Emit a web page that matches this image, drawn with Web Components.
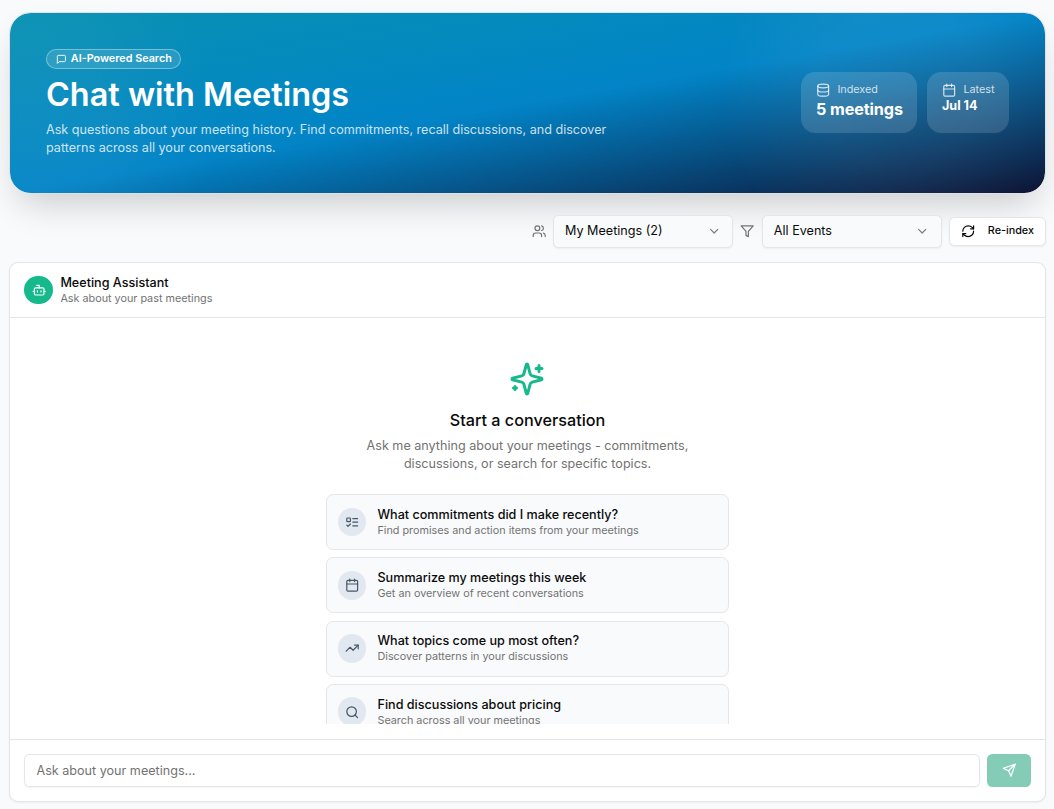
<!DOCTYPE html>
<html lang="en"><head><meta charset="utf-8"><title>Chat with Meetings</title>
<style>
html,body{margin:0;height:100%;background:#f9fafc}
body{font:400 12.6px/18px Inter,"Liberation Sans",sans-serif;color:#0a0a0a;overflow:hidden}
</style></head><body>
<meeting-chat-page></meeting-chat-page>
<script>
const ICONS={
 message:'<path d="M21 15a2 2 0 0 1-2 2H7l-4 4V5a2 2 0 0 1 2-2h14a2 2 0 0 1 2 2z"/>',
 database:'<ellipse cx="12" cy="5" rx="9" ry="3"/><path d="M3 5V19A9 3 0 0 0 21 19V5"/><path d="M3 12A9 3 0 0 0 21 12"/>',
 calendar:'<path d="M8 2v4M16 2v4"/><rect width="18" height="18" x="3" y="4" rx="2"/><path d="M3 10h18"/>',
 users:'<path d="M16 21v-2a4 4 0 0 0-4-4H6a4 4 0 0 0-4 4v2"/><circle cx="9" cy="7" r="4"/><path d="M22 21v-2a4 4 0 0 0-3-3.87"/><path d="M16 3.13a4 4 0 0 1 0 7.75"/>',
 funnel:'<path d="M22 3H2l8 9.46V19l4 2v-8.54L22 3z"/>',
 chevron:'<path d="m6 9 6 6 6-6"/>',
 refresh:'<path d="M3 12a9 9 0 0 1 9-9 9.75 9.75 0 0 1 6.74 2.74L21 8"/><path d="M21 3v5h-5"/><path d="M21 12a9 9 0 0 1-9 9 9.75 9.75 0 0 1-6.74-2.74L3 16"/><path d="M8 16H3v5"/>',
 bot:'<path d="M12 8V4H8"/><rect width="16" height="12" x="4" y="8" rx="2"/><path d="M2 14h2M20 14h2M15 13v2M9 13v2"/>',
 sparkles:'<path d="M9.937 15.5A2 2 0 0 0 8.5 14.063l-6.135-1.582a.5.5 0 0 1 0-.962L8.5 9.936A2 2 0 0 0 9.937 8.5l1.582-6.135a.5.5 0 0 1 .963 0L14.063 8.5A2 2 0 0 0 15.5 9.937l6.135 1.581a.5.5 0 0 1 0 .964L15.5 14.063a2 2 0 0 0-1.437 1.437l-1.582 6.135a.5.5 0 0 1-.963 0z"/><path d="M20 3v4M22 5h-4M4 17v2M5 18H3"/>',
 tasks:'<rect x="3" y="5" width="6" height="6" rx="1"/><path d="m3 17 2 2 4-4"/><path d="M13 6h8M13 12h8M13 18h8"/>',
 trending:'<path d="M22 7 13.5 15.5 8.5 10.5 2 17"/><path d="M16 7h6v6"/>',
 search:'<circle cx="11" cy="11" r="8"/><path d="m21 21-4.3-4.3"/>',
 send:'<path d="m22 2-7 20-4-9-9-4Z"/><path d="M22 2 11 13"/>'
};
function define(name,render){
 customElements.define(name,class extends HTMLElement{
  connectedCallback(){
   if(this.shadowRoot)return;
   const t=document.createElement('template');
   t.innerHTML='<style>*{box-sizing:border-box}:host{box-sizing:border-box}</style>'+render(this);
   this.attachShadow({mode:'open'}).append(t.content.cloneNode(true));
  }
 });
}
define('ui-icon',e=>`<style>:host{display:block;flex:none;width:var(--s,14.4px);height:var(--s,14.4px)}svg{display:block;width:100%;height:100%}</style>
<svg viewBox="0 0 24 24" fill="none" stroke="currentColor" stroke-width="2" stroke-linecap="round" stroke-linejoin="round">${ICONS[e.getAttribute('name')]}</svg>`);

define('hero-stat',e=>`<style>
:host{display:block;height:61px;padding:11.4px 14.4px 9px 15px;border-radius:14.4px;background:rgba(255,255,255,.14)}
.l{display:flex;align-items:center;gap:7px;height:14.4px;font-size:10.8px;line-height:14.4px;color:rgba(255,255,255,.78)}
.v{margin-top:-1px;color:#fff;font-weight:700;white-space:nowrap;font-size:var(--vs);line-height:var(--vl);letter-spacing:var(--ls,0)}
</style><div class="l"><ui-icon name="${e.getAttribute('icon')}"></ui-icon><slot name="label"></slot></div><div class="v"><slot></slot></div>`);

define('hero-banner',()=>`<style>
:host{display:flex;align-items:center;justify-content:space-between;height:182px;padding:0 36px;border:1px solid #dfe1e3;border-radius:21.6px;
background:radial-gradient(circle at 2% 60%,rgba(255,255,255,.045),rgba(255,255,255,.035) 80px,transparent 190px) padding-box,radial-gradient(circle at 86% 42%,rgba(255,255,255,.06),rgba(255,255,255,.05) 80px,transparent 180px) padding-box,linear-gradient(to bottom right,#0891b2,#0284c7 50%,#0c1233) padding-box;
box-shadow:0 18px 36px -10px rgba(0,0,0,.2)}
.badge{display:flex;align-items:center;width:135px;height:20px;padding:0 9px;gap:4px;border:1px solid rgba(255,255,255,.35);border-radius:20px;background:rgba(255,255,255,.13);color:#fff;font-size:10.8px;font-weight:600;line-height:14.4px;white-space:nowrap}
.badge ui-icon{--s:10.8px}
h1{margin:7.5px 0 8.5px;font-size:32.4px;line-height:36px;font-weight:600;color:#fff;white-space:nowrap}
p{margin:0;width:605px;color:rgba(255,255,255,.8)}
.stats{display:flex;gap:10px;margin-bottom:1px}
.m{--vs:16.2px;--vl:25.2px;--ls:-.1px;width:116px}.d{--vs:12.6px;--vl:18px;width:82px}
</style><div><div class="badge"><ui-icon name="message"></ui-icon><span>AI-Powered Search</span></div>
<h1>Chat with Meetings</h1><p>Ask questions about your meeting history. Find commitments, recall discussions, and discover patterns across all your conversations.</p></div>
<div class="stats"><hero-stat class="m" icon="database"><span slot="label">Indexed</span>5 meetings</hero-stat><hero-stat class="d" icon="calendar"><span slot="label">Latest</span>Jul 14</hero-stat></div>`);

define('select-box',()=>`<style>
:host{display:flex;align-items:center;justify-content:space-between;width:180px;height:33px;padding:0 11px;border:1px solid #e4e5e7;border-radius:5.4px;background:#f9fafc;box-shadow:0 1px 2px rgba(0,0,0,.05);color:#0a0a0a}
span{position:relative;top:-1px}ui-icon{color:#7d7d7d}
</style><span><slot></slot></span><ui-icon name="chevron"></ui-icon>`);

define('filter-bar',()=>`<style>
:host{display:flex;align-items:center;justify-content:flex-end;gap:7.2px;height:33px;color:#737373}
ui-icon:first-of-type{margin-right:-.8px}
button{display:flex;align-items:center;justify-content:space-between;width:97px;height:29px;padding:0 11px;border:1px solid #e4e5e7;border-radius:5.4px;background:#fff;box-shadow:0 1px 2px rgba(0,0,0,.05);font:500 10.8px/14px Inter,sans-serif;color:#0a0a0a}
button span{position:relative;top:-1px}
button ui-icon:first-of-type{margin-right:0}
</style><ui-icon name="users"></ui-icon><select-box>My Meetings (2)</select-box><ui-icon name="funnel"></ui-icon><select-box>All Events</select-box><button><ui-icon name="refresh"></ui-icon><span>Re-index</span></button>`);

define('prompt-card',e=>`<style>
:host{display:flex;align-items:center;gap:11.2px;flex:none;height:56.1px;padding:0 10.5px;border:1px solid #e4e5e7;border-radius:7.2px;background:#f9fafc}
i{display:flex;align-items:center;justify-content:center;width:28.8px;height:28.8px;border-radius:50%;background:#e2e8f0;color:#475569}
.t{font-weight:500;line-height:18px;color:#0a0a0a}.s{font-size:10.8px;line-height:14.4px;color:#737373}
</style><i><ui-icon name="${e.getAttribute('icon')}"></ui-icon></i><div><div class="t"><slot></slot></div><div class="s"><slot name="sub"></slot></div></div>`);

define('chat-panel',()=>`<style>
:host{display:flex;flex-direction:column;height:540px;border:1px solid #e4e5e7;border-radius:9px;background:#fff;box-shadow:0 1px 2px rgba(0,0,0,.05)}
header{display:flex;align-items:center;gap:7.2px;height:55px;padding:0 14.4px;border-bottom:1px solid #e4e5e7}
.av{display:flex;align-items:center;justify-content:center;width:28.8px;height:28.8px;border-radius:50%;background:#15b98c;color:#fff}
.n{font-weight:500;line-height:17px}.s{font-size:10.8px;line-height:14.4px;color:#737373;padding-top:1px;margin-bottom:-1px}
main{flex:1;min-height:0;padding:0 0 15px}
.scroll{height:100%;overflow:hidden;display:flex;flex-direction:column;align-items:center;padding-top:43px;text-align:center}
.scroll>ui-icon{--s:36px;color:#15b98c;margin-right:1px}
h2{margin:11px 0 4px;font-size:16.2px;line-height:25.2px;font-weight:500}
p{margin:0;width:345px;color:#737373}
.list{display:flex;flex-direction:column;gap:7.2px;width:403px;margin-top:20.8px;text-align:left}
footer{display:flex;gap:7px;align-items:center;height:62px;padding:0 14px;border-top:1px solid #e4e5e7}
.in{flex:1;height:33px;border:1px solid #e4e5e7;border-radius:5.4px;padding:6px 11.5px;line-height:19px;color:#737373;box-shadow:0 1px 2px rgba(0,0,0,.05)}
button{display:flex;align-items:center;justify-content:center;width:44px;height:33px;padding:0;border:0;border-radius:5.4px;background:#84ccb6;color:#fff}
</style><header><div class="av"><ui-icon name="bot"></ui-icon></div><div><div class="n">Meeting Assistant</div><div class="s">Ask about your past meetings</div></div></header>
<main><div class="scroll"><ui-icon name="sparkles"></ui-icon><h2>Start a conversation</h2><p>Ask me anything about your meetings - commitments, discussions, or search for specific topics.</p>
<div class="list">
<prompt-card icon="tasks">What commitments did I make recently?<span slot="sub">Find promises and action items from your meetings</span></prompt-card>
<prompt-card icon="calendar">Summarize my meetings this week<span slot="sub">Get an overview of recent conversations</span></prompt-card>
<prompt-card icon="trending">What topics come up most often?<span slot="sub">Discover patterns in your discussions</span></prompt-card>
<prompt-card icon="search">Find discussions about pricing<span slot="sub">Search across all your meetings</span></prompt-card>
</div></div></main>
<footer><div class="in">Ask about your meetings...</div><button aria-label="Send"><ui-icon name="send"></ui-icon></button></footer>`);

define('meeting-chat-page',()=>`<style>
:host{display:flex;flex-direction:column;height:809px;padding:12px 8px 0 9px}
filter-bar{margin:21px 0 14px}
</style><hero-banner></hero-banner><filter-bar></filter-bar><chat-panel></chat-panel>`);
</script></body></html>
